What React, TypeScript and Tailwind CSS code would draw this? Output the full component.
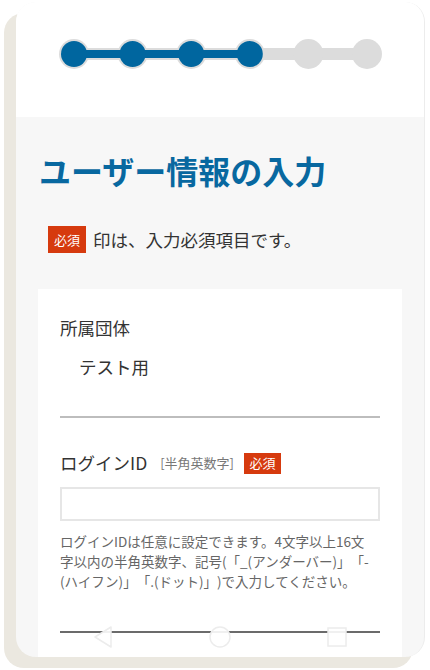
import React from "react";

const BLUE = "#00669f";
const GRAY = "#dcdcdc";

function Stepper() {
  const step = 58.6;
  const centers = [0, 1, 2, 3, 4, 5].map((i) => 15 + i * step);
  return (
    <svg width="324" height="32" viewBox="0 0 324 32" className="ml-[2px]">
      <line x1={centers[0]} y1="16" x2={centers[5]} y2="16" stroke={GRAY} strokeWidth="12" />
      {centers.map((c, i) => (
        <circle key={i} cx={c} cy="16" r="15" fill={GRAY} />
      ))}
      <line x1={centers[0]} y1="16" x2={centers[3]} y2="16" stroke={BLUE} strokeWidth="8" />
      {centers.slice(0, 4).map((c, i) => (
        <circle key={i} cx={c} cy="16" r="13" fill={BLUE} />
      ))}
    </svg>
  );
}

function NavBar() {
  return (
    <div className="absolute left-0 right-0 top-[622px] h-[26px] flex items-center justify-center gap-[94px] pointer-events-none">
      <svg width="22" height="24" viewBox="0 0 22 24">
        <polygon points="19,2 3,12 19,22" fill="white" fillOpacity="0.9" stroke="#ececec" strokeWidth="1.5" strokeLinejoin="round" />
      </svg>
      <svg width="24" height="24" viewBox="0 0 24 24">
        <circle cx="12" cy="12" r="10" fill="white" fillOpacity="0.9" stroke="#ececec" strokeWidth="1.5" />
      </svg>
      <svg width="22" height="22" viewBox="0 0 22 22">
        <rect x="2" y="2" width="18" height="18" fill="white" fillOpacity="0.9" stroke="#ececec" strokeWidth="1.5" />
      </svg>
    </div>
  );
}

export default function App() {
  return (
    <div className="w-[430px] h-[670px] bg-white overflow-hidden font-['Noto_Sans_CJK_JP','Noto_Sans',sans-serif] [text-spacing-trim:space-all]">
      <div className="relative ml-[16px] mt-[2px] w-[409px] h-[655px] rounded-[20px] border-r border-[#ececec] shadow-[-12px_11px_0_0_#ebe8e0] overflow-hidden flex flex-col bg-[#f7f7f7]">
        <div className="bg-white h-[115px] pt-[36px] flex justify-center shrink-0">
          <Stepper />
        </div>
        <div className="flex-1 flex flex-col px-[22px] pt-[31px]">
          <h1 className="ml-[1px] text-[32px] leading-[44px] font-bold text-[#0868a0]">
            ユーザー情報の入力
          </h1>
          <div className="mt-[34px] ml-[10px] flex items-center">
            <span className="w-[38px] h-[27px] bg-[#d63a0e] text-white text-[13px] flex items-center justify-center">
              必須
            </span>
            <span className="ml-[7px] text-[17.5px] leading-[27px] text-[#333333]">
              印は、入力必須項目です。
            </span>
          </div>
          <div className="mt-[36px] flex-1 bg-white px-[22px] pt-[27px]">
            <div className="text-[17.5px] leading-[24px] text-[#333333]">所属団体</div>
            <div className="mt-[15px] pl-[19px] text-[17.5px] leading-[24px] text-[#333333]">テスト用</div>
            <div className="mt-[37px] h-[2px] bg-[#bdbdbd]" />
            <div className="mt-[33px] flex items-center h-[24px]">
              <span className="text-[17.5px] leading-[24px] text-[#333333]">ログインID</span>
              <span className="ml-[13px] text-[13px] text-[#777777]">[半角英数字]</span>
              <span className="ml-[10px] w-[37px] h-[21px] bg-[#d63a0e] text-white text-[13px] flex items-center justify-center">
                必須
              </span>
            </div>
            <div className="mt-[12px] h-[34px] border-2 border-[#e6e6e6] bg-white" />
            <div className="mt-[10px] text-[13.5px] leading-[20px] text-[#666666]">
              <div className="whitespace-nowrap">ログインIDは任意に設定できます。4文字以上16文</div>
              <div className="whitespace-nowrap">字以内の半角英数字、記号(「_(アンダーバー)」「-</div>
              <div className="whitespace-nowrap">(ハイフン)」「.(ドット)」)で入力してください。</div>
            </div>
            <div className="mt-[40px] h-[2px] bg-[#6b6b6b]" />
          </div>
        </div>
        <NavBar />
      </div>
    </div>
  );
}
